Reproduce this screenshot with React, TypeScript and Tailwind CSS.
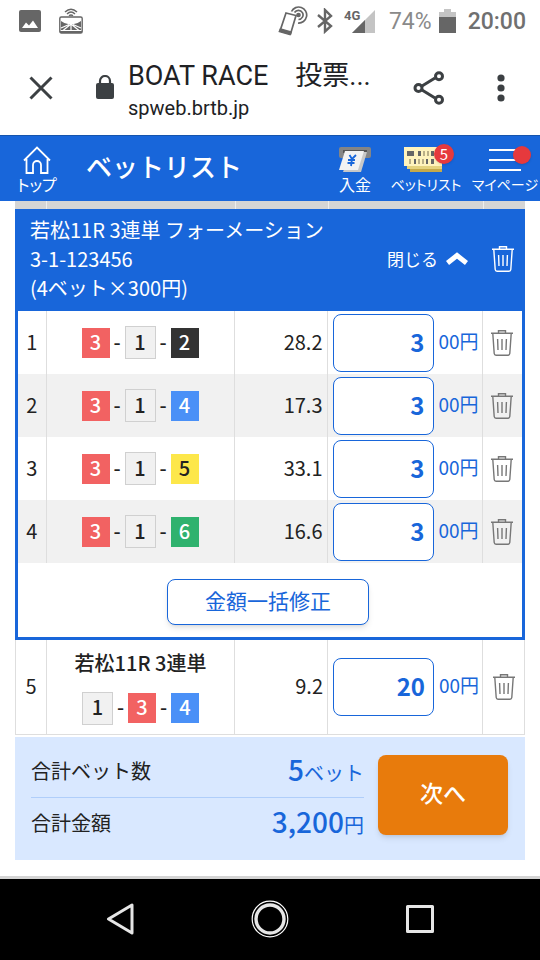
import type { ReactNode } from "react";

type Bet = { no: number; boats: number[]; odds: string; amount: string };

const bets: Bet[] = [
  { no: 1, boats: [3, 1, 2], odds: "28.2", amount: "3" },
  { no: 2, boats: [3, 1, 4], odds: "17.3", amount: "3" },
  { no: 3, boats: [3, 1, 5], odds: "33.1", amount: "3" },
  { no: 4, boats: [3, 1, 6], odds: "16.6", amount: "3" },
];

const boatColors: Record<number, string> = {
  1: "w-[31px] h-[33px] bg-[#f1f1f1] border border-[#d0d0d0] text-[#222]",
  2: "w-7 h-[30px] bg-[#333] text-white",
  3: "w-7 h-[30px] bg-[#f26262] text-white",
  4: "w-7 h-[30px] bg-[#4a90f7] text-white",
  5: "w-7 h-[30px] bg-[#fde74a] text-[#222]",
  6: "w-7 h-[30px] bg-[#2fb26e] text-white",
};

function TrashIcon() {
  return (
    <svg width="22" height="26" viewBox="0 0 22 26" fill="none" stroke="currentColor" strokeWidth="1.4" className="block">
      <path d="M0 3.2H22M7.5 3V.8H14.5V3M1.8 3.5L3.2 23.5Q3.4 25.2 5 25.2H17Q18.6 25.2 18.8 23.5L20.2 3.5" />
      <path d="M6.6 9L7 20M11 9V20M15.4 9L15 20" />
    </svg>
  );
}

function Boats({ boats }: { boats: number[] }) {
  return (
    <div className="flex items-center justify-center text-xl font-medium">
      {boats.map((boat, i) => (
        <div key={boat} className="flex items-center">
          {i > 0 && <span className="w-[15px] pb-0.5 text-center leading-7">-</span>}
          <span className={`flex items-center justify-center pb-0.5 leading-none ${boatColors[boat]}`}>{boat}</span>
        </div>
      ))}
    </div>
  );
}

function BetCells({ bet, children }: { bet: Bet; children?: ReactNode }) {
  return (
    <>
      <td className="border-r border-[#dedede] pb-0.5 text-center">{bet.no}</td>
      <td className="border-r border-[#dedede]">
        {children}
        <Boats boats={bet.boats} />
      </td>
      <td className="border-r border-[#dedede] pb-0.5 pr-1 text-right">{bet.odds}</td>
      <td className="border-r border-[#dedede] pl-[5px]">
        <label className="flex items-center gap-[5px] whitespace-nowrap text-[#1866da]">
          <input
            type="text"
            inputMode="numeric"
            defaultValue={bet.amount}
            aria-label={`${bet.no} 金額`}
            className="h-[58px] w-[101px] shrink-0 rounded-lg border border-[#1866da] bg-white pb-0.5 pr-2 text-right text-2xl font-bold"
          />
          <span className="pb-0.5 text-[19px]">00円</span>
        </label>
      </td>
      <td>
        <button type="button" aria-label="削除" className="mx-auto block text-[#777]">
          <TrashIcon />
        </button>
      </td>
    </>
  );
}

function StatusBar() {
  return (
    <div className="flex h-[42px] items-center justify-between pl-[19px] pr-[14px] text-[#666]">
      <div className="flex items-center gap-[18px]">
        <svg width="22" height="22" viewBox="0 0 22 22">
          <rect width="22" height="22" rx="2" fill="#666" />
          <path d="M3 18L7 12.5L10 15.5L14 10.5L19 18Z" fill="#fff" />
        </svg>
        <svg width="24" height="26" viewBox="0 0 24 26" fill="none" stroke="#666" strokeWidth="1.4">
          <path d="M6 4Q12-1.5 18 4M8 6Q12 2 16 6M10 7.8Q12 6 14 7.8" />
          <rect x=".8" y="9" width="22.4" height="16" rx="1.5" />
          <path d="M2 13Q7 17 12 16Q17 17 22 13V22H2Z" fill="#666" stroke="none" />
          <path d="M12 17V23M12 16L4 22.5M12 16L20 22.5M2 20L10 16.5M22 20L14 16.5" stroke="#fff" strokeWidth="1.2" />
          <path d="M1 24H23" strokeWidth="2" />
        </svg>
      </div>
      <div className="flex items-center font-[Roboto,sans-serif]">
        <svg width="30" height="30" viewBox="0 0 30 30" fill="none" stroke="#666" strokeWidth="1.7">
          <path d="M8 7L18 9.5L12.5 28L2 25Z" />
          <path d="M2.5 23L13 26L12 28.5L1.5 25.5Z" fill="#666" />
          <circle cx="20.5" cy="9" r="1.5" fill="#666" />
          <path d="M16.5 6.5A4.6 4.6 0 1 1 20.5 13.5M13.5 5.5A8 8 0 1 1 20 17" />
        </svg>
        <svg width="16" height="26" viewBox="0 0 16 26" fill="none" stroke="#666" strokeWidth="2.4" className="ml-[9px]">
          <path d="M1 7L14 18L8 23.5V2L14 8L1 19" />
        </svg>
        <svg width="31" height="26" viewBox="0 0 31 26" className="ml-[11px]">
          <path d="M31 2V25H8Z" fill="#c4c4c4" />
          <path d="M21 12V25H8Z" fill="#666" />
          <text x="0" y="12" fontSize="13" fontWeight="700" fill="#666">4G</text>
        </svg>
        <span className="ml-[14px] text-[23px] leading-none text-[#8a8a8a]">74%</span>
        <svg width="17" height="26" viewBox="0 0 17 26" className="ml-[7px]">
          <path d="M0 4H5V1H12V4H17V25H0Z" fill="#c4c4c4" />
          <path d="M0 9H17V25H0Z" fill="#666" />
        </svg>
        <span className="ml-3 text-[23px] font-medium leading-none text-[#707070]">20:00</span>
      </div>
    </div>
  );
}

function BrowserBar() {
  return (
    <div className="flex h-[93px] items-center pb-0.5 pl-[29px] pr-[35px] text-[#3c4043]">
      <button type="button" aria-label="閉じる">
        <svg width="24" height="24" viewBox="0 0 24 24" fill="none" stroke="currentColor" strokeWidth="3">
          <path d="M1.5 1.5L22.5 22.5M22.5 1.5L1.5 22.5" />
        </svg>
      </button>
      <svg width="18" height="25" viewBox="0 0 18 25" className="ml-[43px] shrink-0">
        <rect y="8" width="18" height="16" rx="2" fill="currentColor" />
        <path d="M4 9V6A5 5 0 0 1 14 6V9" fill="none" stroke="currentColor" strokeWidth="2.2" />
      </svg>
      <div className="ml-[14px] min-w-0 flex-1 pt-2 font-[Roboto,'Noto_Sans_CJK_JP',sans-serif] text-[#202124]">
        <p className="whitespace-nowrap text-[27px] leading-8">BOAT RACE　投票...</p>
        <p className="text-xl leading-8">spweb.brtb.jp</p>
      </div>
      <button type="button" aria-label="共有" className="shrink-0">
        <svg width="32" height="34" viewBox="0 0 32 34" fill="none" stroke="currentColor" strokeWidth="3">
          <path d="M9 15L22 7M9 19L22 27" />
          <circle cx="5.5" cy="17" r="3.5" />
          <circle cx="26" cy="5.3" r="3.5" />
          <circle cx="26" cy="28.7" r="3.5" />
        </svg>
      </button>
      <button type="button" aria-label="メニュー" className="ml-[52px] shrink-0">
        <svg width="8" height="28" viewBox="0 0 8 28" fill="currentColor">
          <circle cx="4" cy="4" r="3.6" />
          <circle cx="4" cy="14" r="3.6" />
          <circle cx="4" cy="24" r="3.6" />
        </svg>
      </button>
    </div>
  );
}

function NavItem({ label, className, children }: { label: string; className: string; children: ReactNode }) {
  return (
    <a href="#" className={`flex shrink-0 flex-col items-center ${className}`}>
      <span className="relative flex h-8 items-center">{children}</span>
      <span className="whitespace-nowrap leading-[17px] [font-feature-settings:'palt']">{label}</span>
    </a>
  );
}

function SiteHeader() {
  return (
    <header className="flex h-[66px] items-start border-t border-[#1554ad] bg-[#1866da] pt-2 text-white">
      <NavItem label="トップ" className="w-[74px] text-base">
        <svg width="28" height="28" viewBox="0 0 28 28" fill="none" stroke="currentColor" strokeWidth="1.8">
          <path d="M1 14.5L14 1.5L27 14.5M3.5 13V27H10V19A4 4 0 0 1 18 19V27H24.5V13" />
        </svg>
      </NavItem>
      <h1 className="ml-3 flex-1 whitespace-nowrap text-[26px] font-medium leading-[44px]">ベットリスト</h1>
      <nav className="flex">
        <NavItem label="入金" className="w-[54px] text-base">
          <svg width="34" height="28" viewBox="0 0 34 28">
            <rect x="1" y="1" width="32" height="11" rx="2" fill="#858585" />
            <rect x="5" y="4" width="24" height="3" fill="#555" />
            <path d="M12 6H29L23 26H5Z" fill="#c8c8c8" />
            <path d="M7 5H26L20 24H1Z" fill="#f2f2f2" />
            <path d="M11.5 9L14 13L18 9M14 13L13 20M10 14H17M9.5 17H16.5" stroke="#1866da" strokeWidth="1.8" fill="none" />
          </svg>
        </NavItem>
        <NavItem label="ベットリスト" className="w-[88px] text-sm">
          <svg width="44" height="26" viewBox="0 0 44 26">
            <path d="M6 4H38V25H6Z" fill="#c5a94a" />
            <path d="M3 2H38V22H3Z" fill="#e5d37f" />
            <path d="M0 0H38V19H0Z" fill="#fff3bd" />
            <path d="M3 4H10V9H3ZM14 4H17V9H14ZM27 4H30V9H27ZM10 12H12V17H10ZM22 12H24V17H22ZM27 12H30V17H27Z" fill="#666" />
            <path d="M19 4H21V9H19ZM23 4H25V9H23ZM5 12H7V17H5ZM14 12H16V17H14ZM18 12H20V17H18Z" fill="#bbb087" />
          </svg>
          <span className="absolute -right-1.5 top-0 flex h-5 w-5 items-center justify-center rounded-full bg-[#e6393d] pb-0.5 text-[15px] leading-none shadow">5</span>
        </NavItem>
        <NavItem label="マイページ" className="w-[70px] text-sm">
          <svg width="32" height="24" viewBox="0 0 32 24" stroke="currentColor" strokeWidth="2">
            <path d="M0 2H32M0 12H32M0 22H32" />
          </svg>
          <span className="absolute -right-2.5 top-0.5 h-[18px] w-[18px] rounded-full bg-[#e6393d] shadow" />
        </NavItem>
      </nav>
    </header>
  );
}

function Columns({ first, last }: { first: string; last: string }) {
  return (
    <colgroup>
      <col className={first} />
      <col />
      <col className="w-[93px]" />
      <col className="w-[155px]" />
      <col className={last} />
    </colgroup>
  );
}

export default function App() {
  return (
    <div className="min-h-screen bg-white font-['Noto_Sans_CJK_JP',sans-serif] text-[#222]">
      <StatusBar />
      <BrowserBar />
      <SiteHeader />

      <main className="px-[15px] text-xl">
        <table className="w-full table-fixed bg-[#d5d5d5]">
          <Columns first="w-[31px]" last="w-[42px]" />
          <tbody>
            <tr className="h-2">
              <td className="border-r border-[#eee]" />
              <td className="border-r border-[#eee]" />
              <td className="border-r border-[#eee]" />
              <td className="border-r border-[#eee]" />
              <td />
            </tr>
          </tbody>
        </table>

        <section className="border-x-3 border-b-3 border-[#1866da]">
          <div className="flex items-center bg-[#1866da] pb-[9px] pl-3 pr-2 pt-1.5 text-white">
            <h2 className="flex-1 whitespace-nowrap leading-[29px]">
              若松11R 3連単 フォーメーション
              <br />
              3-1-123456
              <br />
              (4ベット×300円)
            </h2>
            <button type="button" className="flex items-center gap-2 whitespace-nowrap text-[17px]">
              閉じる
              <svg width="22" height="13" viewBox="0 0 22 13" fill="none" stroke="currentColor" strokeWidth="5">
                <path d="M1.5 11L11 3.5L20.5 11" />
              </svg>
            </button>
            <button type="button" aria-label="すべて削除" className="ml-6">
              <TrashIcon />
            </button>
          </div>
          <table className="w-full table-fixed">
            <Columns first="w-7" last="w-10" />
            <tbody>
              {bets.map((bet) => (
                <tr key={bet.no} className="h-[63px] even:bg-[#f1f1f1]">
                  <BetCells bet={bet} />
                </tr>
              ))}
            </tbody>
          </table>
          <div className="flex justify-center pb-3 pt-4">
            <button
              type="button"
              className="mr-1 h-[46px] w-[202px] rounded-lg border border-[#1866da] bg-white pb-1 text-[21px] leading-none text-[#1866da] shadow-md"
            >
              金額一括修正
            </button>
          </div>
        </section>

        <table className="w-full table-fixed">
          <Columns first="w-[31px]" last="w-[42px]" />
          <tbody>
            <tr className="h-[94px] border-x border-b border-[#dedede]">
              <BetCells bet={{ no: 5, boats: [1, 3, 4], odds: "9.2", amount: "20" }}>
                <p className="mb-[15px] text-center font-medium">若松11R 3連単</p>
              </BetCells>
            </tr>
          </tbody>
        </table>

        <section className="mt-0.5 flex items-start gap-[14px] bg-[#d9e8ff] py-2 pl-4 pr-[17px]">
          <dl className="flex-1">
            <div className="flex h-[53px] items-center justify-between border-b border-[#b0cefa]">
              <dt>合計ベット数</dt>
              <dd className="text-[#1866da]">
                <span className="text-[28px] font-medium leading-none">5</span>ベット
              </dd>
            </div>
            <div className="flex h-[54px] items-center justify-between pb-1">
              <dt>合計金額</dt>
              <dd className="text-[#1866da]">
                <span className="text-[28px] font-medium leading-none">3,200</span>円
              </dd>
            </div>
          </dl>
          <button type="button" className="mt-2.5 h-20 w-[130px] rounded-lg bg-[#e87b0c] pb-1 text-[23px] font-medium text-white shadow-md">
            次へ
          </button>
        </section>
      </main>

      <footer className="mt-4 border-t-3 border-[#d4d4d4]">
        <div className="flex h-[81px] items-center justify-between bg-black px-[106px]">
          <button type="button" aria-label="戻る">
            <svg width="28" height="32" viewBox="0 0 28 32" fill="none" stroke="#e6e6e6" strokeWidth="3" strokeLinejoin="round">
              <path d="M26 2V30L2.5 16Z" />
            </svg>
          </button>
          <button type="button" aria-label="ホーム">
            <svg width="38" height="38" viewBox="0 0 38 38" fill="none">
              <circle cx="19" cy="19" r="17.8" stroke="#fff" strokeWidth="1.2" />
              <circle cx="19" cy="19" r="14" stroke="#e6e6e6" strokeWidth="3.4" />
            </svg>
          </button>
          <button type="button" aria-label="履歴">
            <svg width="28" height="28" viewBox="0 0 28 28" fill="none" stroke="#e6e6e6" strokeWidth="3" strokeLinejoin="round">
              <rect x="1.5" y="1.5" width="25" height="25" />
            </svg>
          </button>
        </div>
      </footer>
    </div>
  );
}
